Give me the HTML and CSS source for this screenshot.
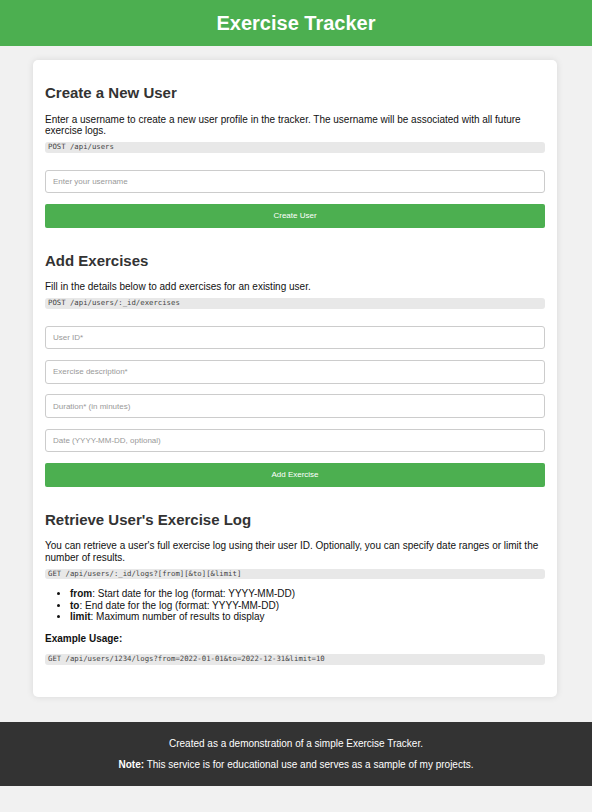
FILE: index.html
```html
<!DOCTYPE html>
<html lang="en">
<head>
<meta charset="utf-8">
<title>Exercise Tracker</title>
<link rel="stylesheet" href="styles.css">
</head>
<body>
<header class="site-header">
  <h1>Exercise Tracker</h1>
</header>
<main class="container">
  <div class="card">
    <section class="section">
      <h2>Create a New User</h2>
      <p class="desc">Enter a username to create a new user profile in the tracker. The username will be associated with all future exercise logs.</p>
      <code class="endpoint">POST /api/users</code>
      <form class="form" onsubmit="return false">
        <input class="field" type="text" placeholder="Enter your username">
        <button class="btn" type="submit">Create User</button>
      </form>
    </section>
    <section class="section">
      <h2>Add Exercises</h2>
      <p class="desc">Fill in the details below to add exercises for an existing user.</p>
      <code class="endpoint">POST /api/users/:_id/exercises</code>
      <form class="form" onsubmit="return false">
        <input class="field" type="text" placeholder="User ID*">
        <input class="field" type="text" placeholder="Exercise description*">
        <input class="field" type="text" placeholder="Duration* (in minutes)">
        <input class="field" type="text" placeholder="Date (YYYY-MM-DD, optional)">
        <button class="btn" type="submit">Add Exercise</button>
      </form>
    </section>
    <section class="section">
      <h2>Retrieve User's Exercise Log</h2>
      <p class="desc">You can retrieve a user's full exercise log using their user ID. Optionally, you can specify date ranges or limit the number of results.</p>
      <code class="endpoint">GET /api/users/:_id/logs?[from][&amp;to][&amp;limit]</code>
      <ul class="params">
        <li><strong>from</strong>: Start date for the log (format: YYYY-MM-DD)</li>
        <li><strong>to</strong>: End date for the log (format: YYYY-MM-DD)</li>
        <li><strong>limit</strong>: Maximum number of results to display</li>
      </ul>
      <h4 class="example-title">Example Usage:</h4>
      <code class="endpoint">GET /api/users/1234/logs?from=2022-01-01&amp;to=2022-12-31&amp;limit=10</code>
    </section>
  </div>
</main>
<footer class="site-footer">
  <p>Created as a demonstration of a simple Exercise Tracker.</p>
  <p><strong>Note:</strong> This service is for educational use and serves as a sample of my projects.</p>
</footer>
</body>
</html>
```
FILE: styles.css
```css
* {
  box-sizing: border-box;
}

html, body {
  margin: 0;
  padding: 0;
}

body {
  background: #f1f1f1;
  font-family: "Liberation Sans", Arial, sans-serif;
  color: #111;
}

.site-header {
  background: #4caf50;
  height: 46px;
  display: flex;
  align-items: center;
  justify-content: center;
}

.site-header h1 {
  margin: 0;
  color: #fff;
  font-size: 20px;
  line-height: 24px;
  font-weight: bold;
}

.container {
  padding: 14px 2px 25px 0;
}

.card {
  width: 524px;
  margin: 0 auto;
  background: #fff;
  border-radius: 5px;
  box-shadow: 0 0 7px rgba(0, 0, 0, 0.1);
  padding: 24px 12px 32px;
}

.section + .section {
  margin-top: 24px;
}

.section h2 {
  margin: 0 0 11.5px;
  font-size: 15px;
  line-height: 18px;
  font-weight: bold;
  color: #333;
}

.desc {
  margin: 0 0 5.5px;
  font-size: 10px;
  line-height: 11.5px;
  color: #111;
}

.endpoint {
  display: block;
  background: #e8e8e8;
  border-radius: 3px;
  padding: 0 3px;
  height: 10.5px;
  font-family: "DejaVu Sans Mono", "Liberation Mono", monospace;
  font-size: 7.3px;
  line-height: 10.5px;
  color: #444;
  white-space: pre;
}

.form {
  margin-top: 17px;
  display: flex;
  flex-direction: column;
  gap: 10.8px;
}

.field {
  height: 23.5px;
  border: 1px solid #ccc;
  border-radius: 3px;
  padding: 0 7px;
  font-family: "Liberation Sans", Arial, sans-serif;
  font-size: 8px;
  color: #333;
  background: #fff;
  outline: none;
}

.field::placeholder {
  color: #999;
}

.btn {
  height: 24px;
  border: none;
  border-radius: 2px;
  background: #4caf50;
  color: #fff;
  font-family: "Liberation Sans", Arial, sans-serif;
  font-size: 8px;
  cursor: pointer;
}

.params {
  margin: 9px 0 0;
  padding-left: 25px;
  font-size: 10px;
  line-height: 11.5px;
  color: #111;
}

.example-title {
  margin: 10.5px 0 9px;
  font-size: 10px;
  line-height: 12px;
  font-weight: bold;
  color: #111;
}

.site-footer {
  background: #333;
  color: #fff;
  text-align: center;
  padding: 16px 0 15px;
  margin-bottom: 26px;
}

.site-footer p {
  margin: 0;
  font-size: 10px;
  line-height: 12px;
}

.site-footer p + p {
  margin-top: 9px;
}
```
